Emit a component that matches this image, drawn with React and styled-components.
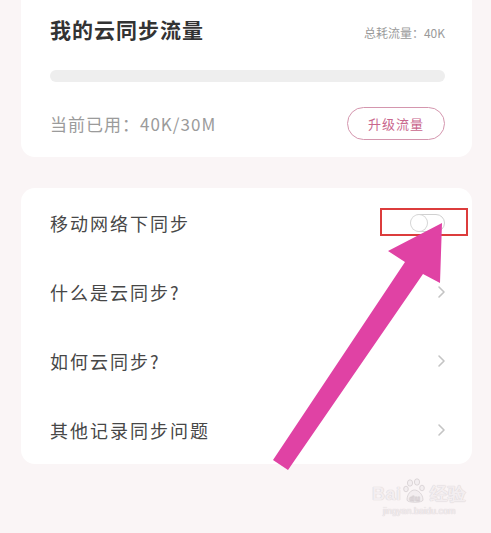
import React from "react";
import styled, { createGlobalStyle } from "styled-components";

const GlobalStyle = createGlobalStyle`
  html, body {
    margin: 0;
    padding: 0;
    background: #faf5f6;
    font-family: "Noto Sans CJK SC", "Noto Sans", sans-serif;
  }
`;

const rows = [
  { label: "移动网络下同步", toggle: true },
  { label: "什么是云同步?" },
  { label: "如何云同步?" },
  { label: "其他记录同步问题" },
];

const Page = styled.div`
  position: relative;
  width: 491px;
  height: 533px;
  overflow: hidden;
  display: flex;
  flex-direction: column;
  gap: 31px;
  padding: 0 19px 0 21px;
  box-sizing: border-box;
`;

const Card = styled.section`
  background: #ffffff;
  border-radius: 14px;
  box-sizing: border-box;
`;

const UsageCard = styled(Card)`
  margin-top: -16px;
  padding: 30px 27px 17px 29px;
  display: flex;
  flex-direction: column;
`;

const Header = styled.div`
  display: flex;
  justify-content: space-between;
  align-items: baseline;
  height: 30px;
`;

const Title = styled.h2`
  margin: 0;
  font-size: 21px;
  line-height: 30px;
  font-weight: 700;
  letter-spacing: 1px;
  color: #333333;
`;

const Total = styled.span`
  font-size: 12px;
  color: #9a9a9a;
`;

const Bar = styled.div`
  margin-top: 26px;
  height: 12px;
  border-radius: 6px;
  background: #eeeeee;
`;

const Footer = styled.div`
  margin-top: 25px;
  display: flex;
  justify-content: space-between;
  align-items: center;
`;

const Used = styled.span`
  font-size: 17px;
  letter-spacing: 1px;
  color: #9b9b9b;
`;

const UpgradeButton = styled.button`
  width: 98px;
  height: 33px;
  border: 1.5px solid #d496ae;
  border-radius: 17px;
  background: #ffffff;
  color: #c9668d;
  font-family: inherit;
  font-size: 13px;
  letter-spacing: 1px;
  padding: 0;
`;

const ListCard = styled(Card)`
  padding: 0 26px 0 29px;
`;

const Row = styled.div`
  height: 69px;
  display: flex;
  align-items: center;
  justify-content: space-between;
`;

const RowLabel = styled.span`
  font-size: 18px;
  letter-spacing: 2px;
  color: #474747;
`;

const Toggle = styled.span`
  width: 34px;
  height: 18px;
  border: 1.5px solid #d0d0d0;
  border-radius: 10px;
  box-sizing: border-box;
  display: flex;
  align-items: center;
  margin-right: 1px;
  &::after {
    content: "";
    width: 16px;
    height: 16px;
    border-radius: 50%;
    background: #fff;
    box-shadow: 0 0 0 1px #d6d6d6;
    margin-left: -1px;
  }
`;

const Highlight = styled.div`
  position: absolute;
  left: 380px;
  top: 208px;
  width: 88px;
  height: 28px;
  border: 2.5px solid #dc3c3c;
  box-sizing: border-box;
  pointer-events: none;
`;

const Overlay = styled.svg`
  position: absolute;
  left: 0;
  top: 0;
  pointer-events: none;
`;

const Watermark = styled.div`
  position: absolute;
  left: 372px;
  top: 478px;
  display: flex;
  flex-direction: column;
  align-items: center;
  color: #f3eef0;
  text-shadow: 0 0 1px #d9d2d5, 0 0 1px #d9d2d5;
  font-family: "Liberation Sans", sans-serif;
  pointer-events: none;
`;

const WaterTop = styled.span`
  display: flex;
  align-items: flex-end;
  font-size: 18px;
  font-weight: 700;
  letter-spacing: 0.5px;
  line-height: 20px;
`;

const WaterUrl = styled.span`
  font-size: 9px;
  margin-top: 2px;
`;

const Chevron = () => (
  <svg width="9" height="14" viewBox="0 0 9 14">
    <path d="M2 2 L7 7 L2 12" fill="none" stroke="#c4c4c4" strokeWidth="1.6" strokeLinecap="round" strokeLinejoin="round" />
  </svg>
);

const Paw = () => (
  <svg width="24" height="26" viewBox="0 0 24 26" style={{ margin: "0 3px 0 1px" }}>
    <g fill="#f3eef0" stroke="#d6cfd2" strokeWidth="0.8">
      <ellipse cx="7" cy="5" rx="2.6" ry="3.2" />
      <ellipse cx="14" cy="4" rx="2.6" ry="3.2" />
      <ellipse cx="3" cy="11" rx="2.3" ry="2.8" />
      <ellipse cx="19" cy="10" rx="2.3" ry="2.8" />
      <path d="M4 22 C4 16 8 12 11.5 12 C15 12 20 16 20 22 C20 25 4 25 4 22 Z" />
    </g>
    <text x="12" y="23" textAnchor="middle" fontSize="8" fontWeight="700" fill="#f3eef0" stroke="#d6cfd2" strokeWidth="0.4" fontFamily="Liberation Sans, sans-serif">du</text>
  </svg>
);

export default function App() {
  return (
    <>
      <GlobalStyle />
      <Page>
        <UsageCard>
          <Header>
            <Title>我的云同步流量</Title>
            <Total>总耗流量：40K</Total>
          </Header>
          <Bar />
          <Footer>
            <Used>当前已用：40K/30M</Used>
            <UpgradeButton>升级流量</UpgradeButton>
          </Footer>
        </UsageCard>
        <ListCard>
          {rows.map((r) => (
            <Row key={r.label}>
              <RowLabel>{r.label}</RowLabel>
              {r.toggle ? <Toggle /> : <Chevron />}
            </Row>
          ))}
        </ListCard>

        <Highlight />
        <Overlay width="491" height="533" viewBox="0 0 491 533">
          <polygon
            points="442,223 440,283 423,274 288,470 273,460 405,262 388,251"
            fill="#e042a4"
          />
        </Overlay>
        <Watermark>
          <WaterTop>
            Bai
            <Paw />
            经验
          </WaterTop>
          <WaterUrl>jingyan.baidu.com</WaterUrl>
        </Watermark>
      </Page>
    </>
  );
}
